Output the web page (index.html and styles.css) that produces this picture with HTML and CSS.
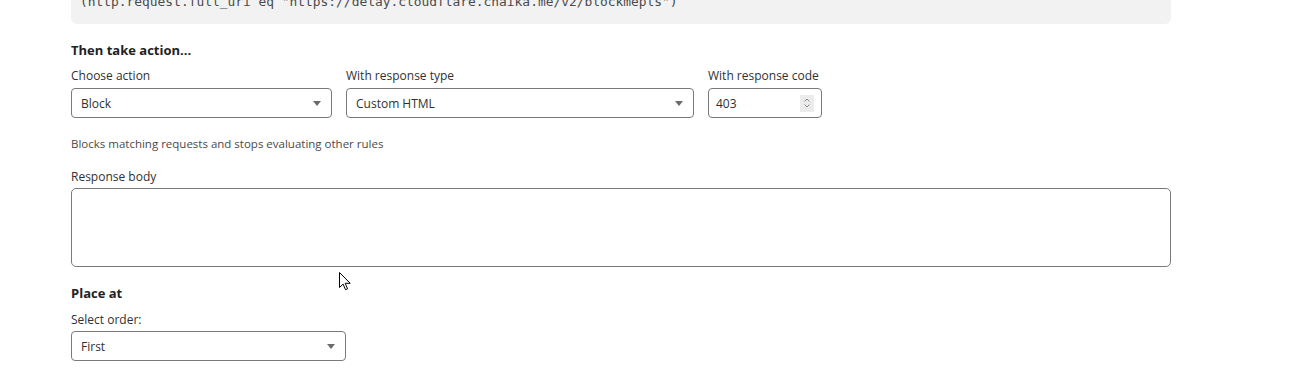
FILE: index.html
```html
<!DOCTYPE html>
<html lang="en">
<head>
  <meta charset="UTF-8">
  <title>Custom rule</title>
  <link rel="stylesheet" href="styles.css">
</head>
<body>
  <div class="container">
    <pre class="expression">(http.request.full_uri eq "https://delay.cloudflare.chaika.me/v2/blockmepls")</pre>

    <h3 class="section-title">Then take action...</h3>
    <div class="row">
      <div class="field field-action">
        <label>Choose action</label>
        <div class="select"><span>Block</span><i class="caret"></i></div>
      </div>
      <div class="field field-type">
        <label>With response type</label>
        <div class="select"><span>Custom HTML</span><i class="caret"></i></div>
      </div>
      <div class="field field-code">
        <label>With response code</label>
        <div class="number">
          <span>403</span>
          <span class="spinner">
            <svg width="8" height="12" viewBox="0 0 8 12"><path d="M1.5 4.5 4 2l2.5 2.5M1.5 7.5 4 10l2.5-2.5" fill="none" stroke="#8a8a8a" stroke-width="1"/></svg>
          </span>
        </div>
      </div>
    </div>
    <p class="hint">Blocks matching requests and stops evaluating other rules</p>

    <div class="field field-body">
      <label>Response body</label>
      <div class="textarea"></div>
    </div>

    <h3 class="section-title place">Place at</h3>
    <div class="field field-order">
      <label>Select order:</label>
      <div class="select"><span>First</span><i class="caret"></i></div>
    </div>
  </div>

  <svg class="cursor" width="12" height="19" viewBox="0 0 12 19">
    <path d="M0.5 0.5v15l3.6-3.4 2.4 5.6 2.1-.9-2.4-5.5h5z" fill="#fff" stroke="#000" stroke-width="1" stroke-linejoin="round"/>
  </svg>
</body>
</html>
```

FILE: styles.css
```css
body {
  margin: 0;
  font-family: "Open Sans", "Noto Sans", sans-serif;
  font-size: 12px;
  color: #313131;
  background: #fff;
  overflow: hidden;
}

.container {
  width: 1100px;
  margin-left: 71px;
}

.expression {
  margin: -20px 0 0;
  padding: 12px 9px;
  background: #f2f2f2;
  border-radius: 0 0 6px 6px;
  font-family: "DejaVu Sans Mono", monospace;
  font-size: 12.9px;
  line-height: 20px;
  color: #4a4a4a;
}

.section-title {
  margin: 16px 0 0;
  font-size: 13px;
  font-weight: 700;
  line-height: 20px;
  color: #222;
}

.section-title.place {
  margin-top: 16px;
}

.row {
  display: flex;
  gap: 14px;
  margin-top: 8px;
}

.field label {
  display: block;
  line-height: 16px;
  margin-bottom: 4px;
  color: #313131;
}

.field-action { width: 261px; }
.field-type { width: 348px; }
.field-code { width: 114px; }

.field-body {
  margin-top: 17px;
}

.field-body label {
  margin-bottom: 3px;
}

.field-order {
  width: 275px;
  margin-top: 9px;
}

.field-order label {
  margin-bottom: 3px;
}

.select,
.number {
  box-sizing: border-box;
  height: 30px;
  display: flex;
  align-items: center;
  padding: 0 9px;
  border: 1px solid #7a7a7a;
  border-radius: 4px;
  background: #fff;
}

.select span,
.number span {
  flex: 1;
}

.caret {
  width: 0;
  height: 0;
  border-left: 4.5px solid transparent;
  border-right: 4.5px solid transparent;
  border-top: 5px solid #6b6b6b;
  margin-right: 1px;
}

.number {
  padding-left: 7px;
  padding-right: 7px;
}

.number .spinner {
  flex: none;
  width: 14px;
  height: 17px;
  display: flex;
  align-items: center;
  justify-content: center;
  background: #ececec;
}

.hint {
  margin: 18px 0 0;
  font-size: 11.5px;
  line-height: 16px;
  color: #4a4a4a;
}

.textarea {
  box-sizing: border-box;
  height: 79px;
  border: 1px solid #7a7a7a;
  border-radius: 5px;
}

.cursor {
  position: absolute;
  left: 339px;
  top: 272px;
}
```
